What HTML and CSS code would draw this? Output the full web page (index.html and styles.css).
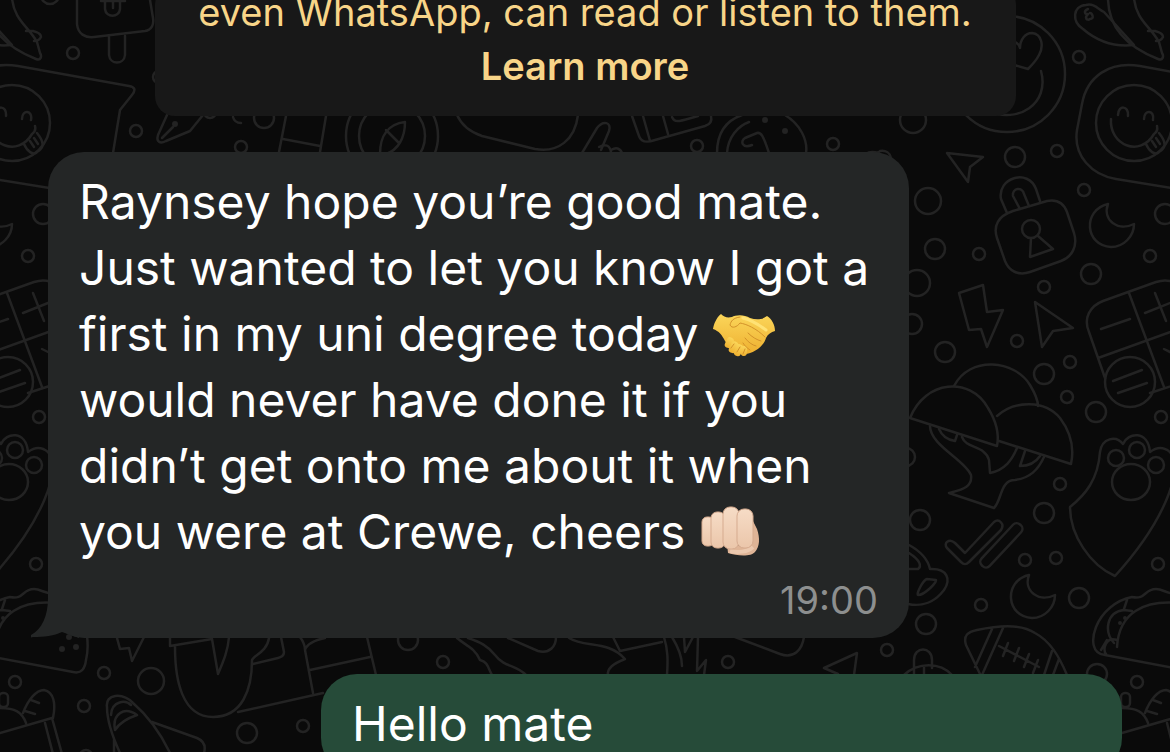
FILE: index.html
```html
<!DOCTYPE html>
<html lang="en">
  <head>
    <meta charset="UTF-8" />
    <meta name="viewport" content="width=device-width, initial-scale=1.0" />
    <title>Chat</title>
    <link rel="stylesheet" href="styles.css">
  </head>
  <body>
    <!-- wallpaper doodles -->
    <svg class="wallpaper" aria-hidden="true">
      <g id="doodles">
        <!-- heart eyes -->
        <circle cx="1007" cy="74" r="58" />
        <path d="M1041 71C1050 104 1018 124 988 111M1008 42C1013 40 1019 43 1020 48C1020 40 1025 33 1032 33C1042 34 1044 46 1039 55C1036 61 1032 65 1028 69L1014 65" />
        <!-- birds -->
        <path d="M1108 -2C1108 30 1130 48 1158 59C1163 61 1164 56 1162 53L1159 42C1150 26 1136 20 1134 -2M1148 31C1156 30 1163 33 1163 37C1161 41 1157 41 1156 41" />
        <path d="M1083 29C1072 22 1072 6 1086 5C1094 3 1098 9 1104 12L1134 45C1116 47 1098 42 1083 29M1088 9C1083 11 1085 15 1088 14C1084 18 1087 21 1090 19M1090 19C1095 19 1092 13 1090 13" />
        <!-- wink in speech bubble -->
        <path d="M1235 153L1242 110L1254 95C1258 90 1257 87 1251 86L1140 66C1110 61 1087 76 1082 104L1077 130C1073 156 1092 175 1116 179L1190 191" />
        <circle cx="1134" cy="123" r="38" />
        <path d="M1118 115C1118 105 1129 105 1128 116M1144 119C1144 109 1155 110 1153 120M1111 119C1109 145 1140 158 1154 134M1157 126C1158 130 1157 132 1154 134M1146 144C1149 151 1155 156 1159 152C1166 148 1167 143 1159 133M1152 141L1156 147M1156 138L1160 144" />
        <!-- cursors -->
        <path d="M947 153L983 157L970 167L968 182Z" />
        <path d="M1035 302L1073 328L1053 331L1042 347Z" />
        <!-- padlock -->
        <path d="M1013 211L1047 201C1058 199 1064 204 1067 212L1074 233C1078 246 1072 257 1061 261L1030 272C1018 276 1009 271 1005 261L997 238C993 226 998 216 1013 211Z" />
        <path d="M1007 213L1001 199C997 178 1028 168 1036 189L1040 201M1020 209L1013 196C1012 188 1022 186 1024 194L1029 206" />
        <circle cx="1031" cy="229" r="9" />
        <path d="M1031 238L1030 257L1053 249L1038 236" />
        <!-- moons -->
        <path id="moon" d="M1108 204C1082 210 1085 246 1111 247C1124 247 1134 236 1134 224C1118 232 1102 220 1108 204Z" />
        <use href="#moon" x="-79" y="371" />
        <!-- bolt -->
        <path d="M959 293L983 285L987 312L1003 310L987 347L981 329L969 330Z" />
        <!-- calculator -->
        <path d="M1105 378L1089 332C1083 318 1090 306 1103 301L1156 282C1168 278 1178 282 1182 290M1150 393L1190 380M1129 293L1164 387M1098 358L1190 325M1101 329L1130 319M1145 313L1175 301M1155 293L1166 321M1164 349L1172 353" />
        <circle cx="1130" cy="382" r="25" />
        <path d="M1113 381L1142 370M1118 393L1147 383" />
        <!-- mushrooms -->
        <path d="M910 418C925 380 970 376 988 408C998 424 999 436 997 446Z" />
        <path d="M954 386C970 355 1015 360 1030 385C1036 395 1038 402 1038 406M997 416C1015 400 1045 400 1060 418C1072 434 1074 450 1071 464L999 441" />
        <path d="M930 426C930 445 965 460 971 475C973 488 960 490 949 493L994 508C1002 500 1000 480 1015 480C1030 478 1038 470 1044 457M962 437C966 449 985 445 989 460L990 473C1005 470 1012 460 1017 448M939 429C942 436 948 440 955 441L957 435M1025 451L1020 466C1030 466 1036 462 1040 456" />
        <!-- paw -->
        <path d="M1115 576C1090 565 1070 535 1070 507C1085 495 1098 480 1100 452C1102 438 1116 435 1123 444C1128 432 1148 430 1150 452C1158 446 1164 447 1170 452C1184 470 1164 522 1115 576Z" />
        <circle cx="1116" cy="458" r="8" />
        <circle cx="1137" cy="450" r="8" />
        <circle cx="1156" cy="465" r="8" />
        <ellipse cx="1131" cy="482" rx="19" ry="18" />
        <!-- ticks -->
        <path d="M947 548L961 562C964 565 966 565 969 562L1001 530C1005 524 999 518 994 522L965 553L955 543C949 538 943 543 947 548Z" />
        <rect x="973" y="540" width="56" height="11" rx="5" transform="rotate(-47 1001 545)" />
        <!-- rings -->
        <path d="M909 545C920 551 928 560 930 569C948 568 951 580 944 590C935 602 922 607 908 604M909 553C920 560 922 566 918 569H909M927 579L936 580C937 582 925 595 918 595C916 594 923 580 927 579Z" />
        <!-- football -->
        <path d="M980 674L966 645C963 635 968 632 977 630C1000 625 1022 624 1035 633C1050 641 1059 656 1067 675M992 629L975 667M1003 628L982 675M1052 651L1044 675M1059 659L1053 675M999 646L1039 667M1008 643L1003 656M1019 648L1014 661M1029 654L1024 667M1038 660L1033 673" />
        <!-- taco -->
        <path d="M1105 655L1195 672C1204 674 1207 668 1208 660C1210 652 1210 644 1209 636M1105 655C1092 654 1091 640 1096 627C1102 612 1116 600 1132 597C1146 600 1144 589 1156 589C1164 589 1169 596 1180 593M1117 647C1119 612 1145 600 1178 603M1127 600L1124 609M1114 643C1104 632 1106 612 1124 610L1132 611M1117 640C1106 636 1102 650 1106 654M1101 650L1107 640" />
        <!-- satchel -->
        <path d="M914 674V660C914 646 932 646 932 660V668M904 675C918 662 940 662 952 675M924 666V674" />
        <!-- box with bread -->
        <path d="M1122 733L1174 718L1184 754M1167 723L1175 754M1122 708C1137 708 1144 712 1148 723M1145 713C1150 700 1158 690 1166 690C1176 692 1178 704 1175 718M1153 700L1161 703M1147 711L1157 714" />
        <rect x="1121" y="693" width="9" height="14" rx="4" />
        <!-- bubbles -->
        <circle cx="1079" cy="57" r="6" />
        <circle cx="1015" cy="157" r="10" />
        <circle cx="1057" cy="151" r="6" />
        <circle cx="1084" cy="190" r="6" />
        <circle cx="928" cy="201" r="13" />
        <circle cx="935" cy="249" r="10" />
        <circle cx="1165" cy="214" r="10" />
        <circle cx="979" cy="254" r="6" />
        <circle cx="917" cy="283" r="13" />
        <circle cx="912" cy="324" r="10" />
        <circle cx="945" cy="352" r="10" />
        <circle cx="1044" cy="287" r="6" />
        <circle cx="1091" cy="274" r="10" />
        <circle cx="1150" cy="256" r="6" />
        <circle cx="1017" cy="341" r="6" />
        <circle cx="1044" cy="374" r="10" />
        <circle cx="1070" cy="362" r="6" />
        <circle cx="1067" cy="397" r="6" />
        <circle cx="1096" cy="412" r="10" />
        <circle cx="1161" cy="417" r="6" />
        <circle cx="906" cy="457" r="9" />
        <circle cx="920" cy="520" r="10" />
        <circle cx="1044" cy="513" r="10" />
        <circle cx="1060" cy="484" r="6" />
        <circle cx="1025" cy="560" r="6" />
        <circle cx="1056" cy="558" r="6" />
        <circle cx="1158" cy="564" r="6" />
        <circle cx="981" cy="605" r="6" />
        <circle cx="1079" cy="598" r="10" />
        <circle cx="926" cy="624" r="10" />
        <circle cx="1097" cy="674" r="10" />
        <circle cx="1137" cy="682" r="6" />
        <g class="dots">
          <circle cx="1120" cy="623" r="2" />
          <circle cx="1125" cy="618" r="2" />
          <circle cx="1184" cy="649" r="3" />
          <circle cx="1198" cy="647" r="3" />
          <circle cx="1191" cy="637" r="3" />
        </g>
      </g>
      <use href="#doodles" x="-1122" />

      <!-- ice lolly and pen -->
      <path d="M77 0V24C78 34 85 38 94 37L145 31C152 30 154 24 153 18L150 0M101 1H125M105 2V9C106 18 119 18 120 9V2M113 2V8M109 37V55C110 65 124 65 125 55V36" />
      <circle cx="50" cy="-5" r="9" />
      <path d="M167 115L158 135C156 142 160 144 166 141L190 131L203 115M173 127L162 138M233 117C234 121 237 123 241 123" />
      <circle cx="73" cy="53" r="6" />
      <circle cx="136" cy="131" r="6" />
      <circle cx="159" cy="77" r="6" />
      <circle cx="241" cy="147" r="6" />
      <circle cx="264" cy="118" r="10" />
      <circle cx="210" cy="112" r="6" />
      <!-- strip between notice and first message -->
      <path d="M286 116L279 152M326 116L320 152M283 139L320 146" />
      <circle cx="392" cy="136" r="46" />
      <circle cx="392" cy="136" r="33" />
      <path d="M405 122C388 124 380 136 380 154M405 122C405 138 398 150 386 154M386 130L399 143" />
      <path d="M457 115C462 126 470 132 482 136L535 149C558 153 575 140 578 115" />
      <path d="M582 153L597 128C603 120 612 122 609 131L601 150M599 147C606 143 610 146 611 152M611 150C616 147 620 148 622 153" />
      <path d="M632 116L639 136C641 142 646 143 655 140L705 126C711 124 712 120 711 116M643 116L650 141M663 116L668 134M672 117C675 124 680 121 698 116" />
      <path d="M717 153C717 134 725 121 742 115M727 153C728 137 738 126 749 122M752 145C742 149 740 141 745 138L757 133C761 132 763 135 769 153M785 115C800 124 808 140 806 153" />
      <circle cx="697" cy="146" r="6" />
      <circle cx="833" cy="144" r="6" />
      <circle cx="913" cy="120" r="13" />
      <path d="M866 154C872 149 878 155 880 151C886 150 890 153 891 158" />
      <!-- strip under first message -->
      <path d="M117 638L120 649L129 648L132 661L144 637" />
      <path d="M170 637V646L212 639M175 647C175 680 182 717 213 717C242 717 252 690 252 660C254 655 267 652 269 638M212 639L218 674C224 660 228 650 229 637M281 637L284 652C284 655 282 657 278 658L253 664M238 712L323 693" />
      <path d="M300 637C303 641 305 645 305 650L313 693M305 650C307 643 316 640 325 638M310 670L370 657M367 637L376 675" />
      <path d="M107 707C105 694 122 692 133 703C148 716 160 732 170 753M107 707C107 722 114 740 120 753M115 730C120 722 128 718 137 715C124 706 112 714 115 730M111 715C112 700 126 700 131 705M152 722L197 738C204 741 206 746 204 753M114 740V753" />
      <circle cx="84" cy="706" r="6" />
      <circle cx="86" cy="756" r="6" />
      <circle cx="104" cy="673" r="6" />
      <circle cx="151" cy="681" r="13" />
      <circle cx="247" cy="733" r="10" />
      <circle cx="303" cy="726" r="6" />
      <circle cx="408" cy="640" r="10" />
      <circle cx="443" cy="662" r="6" />
      <circle cx="728" cy="662" r="6" />
      <circle cx="887" cy="650" r="6" />
      <path d="M457 638C465 645 475 648 480 660C488 662 488 668 492 675M468 638C480 642 488 646 495 655C505 668 515 664 526 675M508 638L538 651C550 654 556 646 556 637" />
      <path d="M569 638C585 648 608 640 625 659C612 664 607 670 608 675M613 637L620 651L662 642M664 637C668 650 668 660 667 675M672 637C680 650 682 658 682 666M684 637L685 652L693 637M698 637L697 671L706 660L704 675" />
      <path d="M735 637L780 654C794 659 802 650 804 637M838 674L824 668L857 653L854 675" />
      <g class="dots">
        <circle cx="175" cy="124" r="3" />
        <circle cx="765" cy="120" r="3" />
        <circle cx="785" cy="131" r="3" />
      </g>
    </svg>

    <main class="chat">
      <div class="notice">
        even WhatsApp, can read or listen to them.<br>
        <a href="#">Learn more</a>
      </div>

      <div class="message incoming">
        <p>
          Raynsey hope you’re good mate.<br>
          Just wanted to let you know I got a<br>
          first in my uni degree today
          <svg class="emoji" viewBox="0 0 64 64" role="img" aria-label="handshake">
            <defs>
              <linearGradient id="gold" x1="0" y1="0" x2="0" y2="1">
                <stop offset="0" stop-color="#fbd65a" />
                <stop offset="1" stop-color="#eeb030" />
              </linearGradient>
            </defs>
            <g fill="url(#gold)">
              <path d="M9 11C4 15 2 21 1 26C7 28 10 32 13 38C17 45 27 51 33 51C41 51 52 43 54 35C56 31 59 29 63 28C63 22 60 16 55 13C50 17 44 17 38 15C32 11 23 12 20 14C15 15 12 14 9 11Z" />
              <rect x="14" y="34" width="7" height="11" rx="3" transform="rotate(25 17 39)" />
              <rect x="18" y="38" width="7" height="12" rx="3" transform="rotate(25 21 44)" />
              <rect x="23" y="41" width="7" height="12" rx="3" transform="rotate(20 26 47)" />
              <rect x="29" y="43" width="6" height="10" rx="3" transform="rotate(5 32 48)" />
            </g>
            <g fill="none" stroke="#d3922a" stroke-width="1" stroke-linecap="round">
              <path d="M28 14C21 15 19 18 18 22C20 26 25 24 28 20C34 21 44 25 53 34M36 30C40 34 45 37 49 38M33 35C36 39 40 42 44 43M31 40C33 43 35 45 38 47M19 45L22 41M25 49L28 44M31 51L33 46" />
            </g>
            <path d="M31 15C39 17 46 21 54 27" fill="none" stroke="#ffe275" stroke-width="3" stroke-linecap="round" />
          </svg><br>
          would never have done it if you<br>
          didn’t get onto me about it when<br>
          you were at Crewe, cheers
          <svg class="emoji" viewBox="0 0 64 64" role="img" aria-label="oncoming fist">
            <defs>
              <linearGradient id="skin" x1="0" y1="0" x2="0" y2="1">
                <stop offset="0" stop-color="#f6dcc6" />
                <stop offset="1" stop-color="#ebc6aa" />
              </linearGradient>
            </defs>
            <path d="M28 43L29 52C38 55 52 56 56 51C61 45 61 37 58 28L53 18L46 46Z" fill="#dfb496" />
            <path d="M31 50C38 52 49 51 54 46" fill="none" stroke="#ecc9af" stroke-width="4" />
            <g fill="url(#skin)" stroke="#d6ab8f" stroke-width="1">
              <rect x="3" y="16" width="12" height="29" rx="5" />
              <rect x="12" y="11" width="14" height="36" rx="6" />
              <rect x="24" y="6" width="16" height="42" rx="7" />
              <rect x="38" y="8" width="16" height="39" rx="7" />
            </g>
          </svg>
        </p>
        <time>19:00</time>
        <svg class="tail" viewBox="0 0 48 50" aria-hidden="true">
          <path d="M17 0V10C17 28 11 41 0 47C-2 49 0 50 2 49C13 49 23 48 31 44L48 50V0Z" />
        </svg>
      </div>

      <div class="message outgoing">
        <p>Hello mate</p>
      </div>
    </main>
  </body>
</html>
```
FILE: styles.css
```css
* {
  box-sizing: border-box;
  padding: 0;
  margin: 0;
}
body {
  position: relative;
  height: 100vh;
  overflow: hidden;
  background-color: #0a0a0a;
  font-family: Inter, "Liberation Sans", sans-serif;
}
.wallpaper {
  position: absolute;
  top: 0;
  left: 0;
  width: 100%;
  height: 100%;
  fill: none;
  stroke: #232323;
  stroke-width: 2.5;
  stroke-linecap: round;
  stroke-linejoin: round;
}
.wallpaper .dots {
  fill: #232323;
  stroke: none;
}
.chat {
  position: relative;
  display: flex;
  flex-direction: column;
  gap: 36px;
  padding: 0 48px;
}
.notice {
  align-self: center;
  width: 81%;
  max-width: 861px;
  margin-top: -15px;
  padding-bottom: 23px;
  border-radius: 20px;
  background-color: #181818;
  color: #f8d588;
  font-size: 38px;
  line-height: 54px;
  text-align: center;
  white-space: nowrap;
}
.notice a {
  color: inherit;
  font-weight: 600;
  text-decoration: none;
}
.message {
  position: relative;
  padding: 17px 31px;
  border-radius: 36px;
  color: #fff;
  font-size: 48px;
  line-height: 66px;
  white-space: nowrap;
}
.incoming {
  align-self: flex-start;
  width: 81%;
  max-width: 861px;
  background-color: #242626;
}
.outgoing {
  align-self: flex-end;
  width: 75%;
  max-width: 801px;
  background-color: #264b39;
}
.message time {
  display: block;
  margin-top: 14px;
  color: #8d8f8f;
  font-size: 38px;
  line-height: 42px;
  text-align: right;
}
.emoji {
  width: 64px;
  height: 64px;
  margin: -8px 0;
  vertical-align: -8px;
}
.tail {
  position: absolute;
  left: -17px;
  bottom: 0;
  width: 48px;
  height: 50px;
  fill: #242626;
}
```
